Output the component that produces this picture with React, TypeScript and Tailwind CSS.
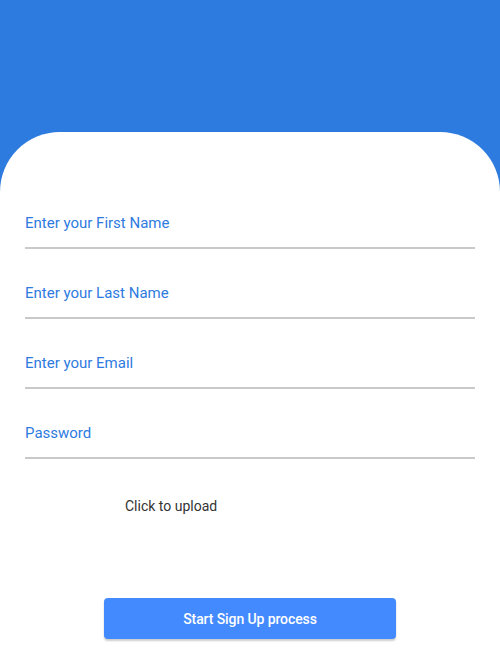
const fields = ['Enter your First Name', 'Enter your Last Name', 'Enter your Email', 'Password'];

export default function App() {
  return (
    <div className="min-h-[660px] w-[500px] bg-[#2e7be0] pt-[132px] font-['Roboto',sans-serif]">
      <div className="flex min-h-[528px] flex-col rounded-t-[60px] bg-white px-[25px] pt-[47px]">
        {fields.map((label) => (
          <div key={label} className="flex h-[70px] flex-col justify-end border-b-2 border-[#c9c9c9]">
            <span className="mb-[15px] text-[15px] leading-[18px] text-[#2e7be0]">{label}</span>
          </div>
        ))}
        <div className="mt-[37px] pl-[100px] text-[14px] leading-[20px] text-[#333333]">Click to upload</div>
        <button
          type="button"
          className="mx-auto mt-[82px] h-[41px] w-[292px] rounded-[4px] bg-[#448aff] pt-[2px] text-[14px] font-medium tracking-[-0.1px] text-white shadow-[0_2px_2px_rgba(0,0,0,0.2)]"
        >
          Start Sign Up process
        </button>
      </div>
    </div>
  );
}
